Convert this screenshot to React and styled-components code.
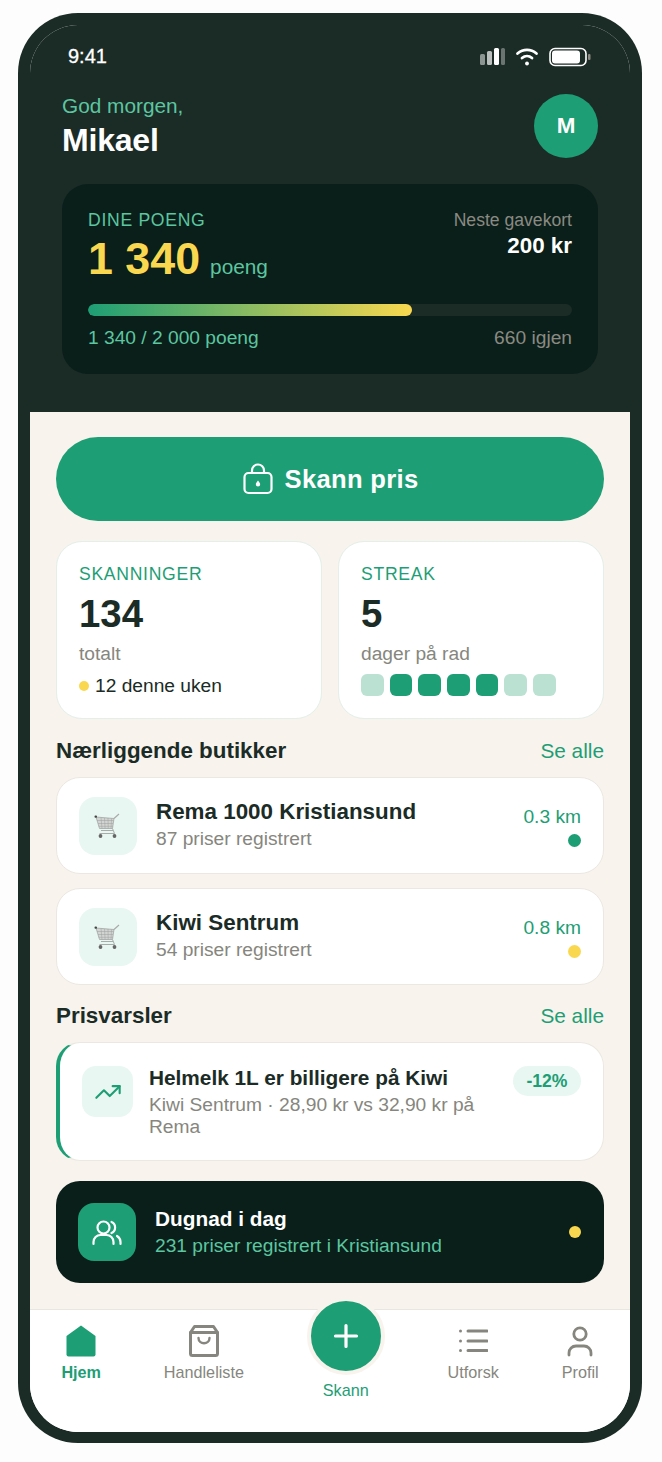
import React from 'react';
import styled, { createGlobalStyle } from 'styled-components';
import { TrendingUp } from 'lucide-react';

const GlobalStyle = createGlobalStyle`
  html, body {
    margin: 0;
    padding: 0;
    background: #fdfdfd;
  }
  body {
    font-family: "Liberation Sans", Arial, sans-serif;
  }
  * {
    box-sizing: border-box;
  }
`;

const Phone = styled.div`
  width: 624px;
  height: 1430px;
  margin: 13px 0 0 18px;
  background: #1b2b26;
  border-radius: 60px;
  padding: 12px 12px 11px;
`;

const Screen = styled.div`
  height: 100%;
  border-radius: 48px;
  overflow: hidden;
  display: flex;
  flex-direction: column;
  background: #fff;
`;

const Header = styled.header`
  height: 387px;
  background: #1b2b26;
  padding: 0 32px;
  flex-shrink: 0;
`;

const StatusBar = styled.div`
  height: 46px;
  margin: 0 -24px;
  padding: 0 29px 0 30px;
  display: flex;
  align-items: flex-end;
  justify-content: space-between;
  color: #fff;
  font-size: 20px;
  line-height: 30px;
  -webkit-text-stroke: 0.3px #fff;
`;

const StatusIcons = styled.div`
  display: flex;
  align-items: center;
  height: 28px;
`;

const Greeting = styled.div`
  display: flex;
  justify-content: space-between;
  margin-top: 23px;
`;

const Hello = styled.div`
  color: #5cc6a0;
  font-size: 20.8px;
  line-height: 24px;
  margin-bottom: 4px;
`;

const Name = styled.div`
  color: #fff;
  font-size: 32px;
  font-weight: 700;
  line-height: 37px;
  letter-spacing: -0.2px;
`;

const Avatar = styled.div`
  width: 64px;
  height: 64px;
  border-radius: 50%;
  background: #1d9e75;
  color: #fff;
  font-size: 22.4px;
  font-weight: 700;
  display: flex;
  align-items: center;
  justify-content: center;
`;

const PointsCard = styled.section`
  height: 190px;
  margin-top: 25px;
  padding: 24px 26px 0;
  background: #0a1f1a;
  border-radius: 26px;
`;

const PointsTop = styled.div`
  display: flex;
  justify-content: space-between;
  height: 96px;
`;

const PointsLabel = styled.div`
  color: #5cc6a0;
  font-size: 17.6px;
  line-height: 24px;
  letter-spacing: 0.7px;
`;

const PointsValue = styled.div`
  display: flex;
  align-items: baseline;
  gap: 10px;
  color: #f9d84f;
  font-size: 44.8px;
  font-weight: 700;
  line-height: 52px;
`;

const PointsUnit = styled.span`
  color: #5cc6a0;
  font-size: 20.8px;
  font-weight: 400;
`;

const NextGift = styled.div`
  text-align: right;
  color: #8a8a82;
  font-size: 17.6px;
  line-height: 24px;
`;

const GiftValue = styled.div`
  color: #fff;
  font-size: 22.4px;
  font-weight: 700;
  line-height: 28px;
`;

const Track = styled.div`
  height: 12px;
  background: #1b2b26;
  border-radius: 6px;
  overflow: hidden;
`;

const Fill = styled.div`
  height: 100%;
  border-radius: 6px;
  background: linear-gradient(90deg, #1d9e75, #f9d84f);
`;

const ProgressLabels = styled.div`
  display: flex;
  justify-content: space-between;
  margin-top: 9px;
  font-size: 19.2px;
  line-height: 26px;
  color: #5cc6a0;
`;

const MutedSpan = styled.span`
  color: #8a8a82;
`;

const Main = styled.main`
  flex: 1;
  background: #f8f3ed;
  padding: 25px 26px 0;
  display: flex;
  flex-direction: column;
`;

const ScanButton = styled.button`
  height: 84px;
  flex-shrink: 0;
  border: 0;
  border-radius: 42px;
  background: #1d9e75;
  color: #fff;
  font-family: inherit;
  font-size: 25.6px;
  font-weight: 700;
  letter-spacing: 0.3px;
  display: flex;
  align-items: center;
  justify-content: center;
  gap: 11px;
`;

const Stats = styled.div`
  display: grid;
  grid-template-columns: 1fr 1fr;
  gap: 16px;
  margin-top: 20px;
`;

const StatCard = styled.div`
  height: 178px;
  background: #fff;
  border: 1px solid #e3efe9;
  border-radius: 26px;
  padding: 20px 22px 0;
`;

const StatLabel = styled.div`
  color: #1d9e75;
  font-size: 17.6px;
  line-height: 24px;
  letter-spacing: 0.7px;
`;

const StatValue = styled.div`
  color: #1b2b26;
  font-size: 38.4px;
  font-weight: 700;
  line-height: 44px;
  margin-top: 6px;
`;

const StatSub = styled.div`
  color: #86867e;
  font-size: 19.2px;
  line-height: 24px;
  margin-top: 6px;
`;

const StatNote = styled.div`
  display: flex;
  align-items: center;
  gap: 6px;
  color: #1b2b26;
  font-size: 19.2px;
  line-height: 24px;
  margin-top: 8px;
`;

const Dot = styled.span`
  flex-shrink: 0;
  width: ${(p) => p.$size || 13}px;
  height: ${(p) => p.$size || 13}px;
  border-radius: 50%;
  background: ${(p) => (p.$green ? '#1d9e75' : '#f9d84f')};
`;

const StreakRow = styled.div`
  display: flex;
  gap: 6px;
  margin-top: 8px;
`;

const StreakDay = styled.span`
  width: 22.7px;
  height: 22px;
  border-radius: 6px;
  background: ${(p) => (p.$on ? '#1d9e75' : '#bbe1d3')};
`;

const SectionHead = styled.div`
  display: flex;
  justify-content: space-between;
  align-items: center;
  height: 26px;
  margin-top: ${(p) => p.$top}px;
  margin-bottom: ${(p) => p.$bottom}px;
`;

const SectionTitle = styled.h2`
  margin: 0;
  color: #1b2b26;
  font-size: 22.4px;
  font-weight: 700;
`;

const SeeAll = styled.a`
  color: #1d9e75;
  font-size: 20.8px;
`;

const StoreList = styled.div`
  display: flex;
  flex-direction: column;
  gap: 14px;
`;

const StoreCard = styled.div`
  height: 97px;
  background: #fff;
  border: 1px solid #ebe8e2;
  border-radius: 24px;
  padding: 0 22px;
  display: flex;
  align-items: center;
`;

const StoreIcon = styled.div`
  width: 58px;
  height: 58px;
  flex-shrink: 0;
  border-radius: 16px;
  background: #e8f7f1;
  display: flex;
  align-items: center;
  justify-content: center;
`;

const StoreInfo = styled.div`
  flex: 1;
  margin-left: 19px;
`;

const StoreName = styled.div`
  color: #1b2b26;
  font-size: 22.4px;
  font-weight: 700;
  line-height: 28px;
  margin-top: -1px;
`;

const StoreSub = styled.div`
  color: #86867e;
  font-size: 19.2px;
  line-height: 26px;
`;

const StoreRight = styled.div`
  display: flex;
  flex-direction: column;
  align-items: flex-end;
  gap: 4px;
  color: #1d9e75;
  font-size: 19.2px;
  line-height: 26px;
`;

const AlertCard = styled.div`
  height: 119px;
  background: #fff;
  border: 1px solid #ebe8e2;
  border-left: 4px solid #1d9e75;
  border-radius: 24px;
  padding: 23px 22px 0 22px;
  display: flex;
  align-items: flex-start;
`;

const AlertIcon = styled.div`
  width: 51px;
  height: 51px;
  flex-shrink: 0;
  border-radius: 14px;
  background: #e8f7f1;
  color: #1d9e75;
  display: flex;
  align-items: center;
  justify-content: center;
`;

const AlertBody = styled.div`
  flex: 1;
  margin: -1px 30px 0 16px;
`;

const AlertTitle = styled.div`
  color: #1b2b26;
  font-size: 20.8px;
  font-weight: 700;
  line-height: 26px;
`;

const AlertSub = styled.div`
  color: #86867e;
  font-size: 19.2px;
  line-height: 22px;
  margin-top: 3px;
`;

const Badge = styled.div`
  flex-shrink: 0;
  height: 30px;
  padding: 0 13.5px;
  border-radius: 15px;
  background: #e8f7f1;
  color: #1d9e75;
  font-size: 17.6px;
  font-weight: 700;
  display: flex;
  align-items: center;
`;

const DugnadCard = styled.div`
  height: 102px;
  flex-shrink: 0;
  margin-top: 20px;
  background: #0a1f1a;
  border-radius: 24px;
  padding: 0 23px 0 22px;
  display: flex;
  align-items: center;
`;

const DugnadIcon = styled.div`
  width: 58px;
  height: 58px;
  border-radius: 16px;
  background: #1d9e75;
  display: flex;
  align-items: center;
  justify-content: center;
`;

const DugnadBody = styled.div`
  flex: 1;
  margin-left: 19px;
`;

const DugnadTitle = styled.div`
  color: #fff;
  font-size: 20.8px;
  font-weight: 700;
  line-height: 28px;
`;

const DugnadSub = styled.div`
  color: #5cc6a0;
  font-size: 19.2px;
  line-height: 26px;
`;

const Nav = styled.nav`
  height: 123px;
  flex-shrink: 0;
  background: #fff;
  border-top: 1px solid #e8e6e0;
  display: flex;
  justify-content: space-around;
  align-items: flex-start;
  padding-top: 15px;
`;

const NavItem = styled.div`
  display: flex;
  flex-direction: column;
  align-items: center;
  gap: 5px;
  color: ${(p) => (p.$active ? '#1d9e75' : '#86867e')};
  font-size: 16.2px;
  font-weight: ${(p) => (p.$active ? 700 : 400)};
  line-height: 20px;
`;

const NavScan = styled.div`
  display: flex;
  flex-direction: column;
  align-items: center;
  margin-top: -28px;
  color: #1d9e75;
  font-size: 16.2px;
  line-height: 20px;
  gap: 5px;
`;

const Fab = styled.div`
  width: 78px;
  height: 78px;
  border-radius: 50%;
  background: #1d9e75;
  border: 4px solid #f8f3ed;
  display: flex;
  align-items: center;
  justify-content: center;
`;

const SignalIcon = () => (
  <svg width="26" height="20" viewBox="0 0 26 20" fill="#fff">
    <rect x="0" y="7" width="5" height="11" rx="1.5" opacity="0.5" />
    <rect x="7" y="4" width="5" height="14" rx="1.5" opacity="0.7" />
    <rect x="14" y="1" width="5" height="17" rx="1.5" />
    <rect x="21" y="1" width="4" height="17" rx="1.5" opacity="0.35" />
  </svg>
);

const WifiIcon = () => (
  <svg width="24" height="20" viewBox="0 0 24 20" fill="none" stroke="#fff" strokeWidth="2.8" strokeLinecap="round" style={{ marginLeft: 9 }}>
    <path d="M2.500 6.500c5.600-4.800 13.400-4.800 19 0" />
    <path d="M7 11c3-2.600 7-2.600 10 0" />
    <circle cx="12" cy="16.500" r="1.900" fill="#fff" stroke="none" />
  </svg>
);

const BatteryIcon = () => (
  <svg width="44" height="20" viewBox="0 0 44 20" style={{ marginLeft: 10 }}>
    <rect x="1" y="1.500" width="36" height="17" rx="5" fill="none" stroke="#fff" strokeWidth="1.6" />
    <rect x="3" y="3.500" width="28" height="13" rx="3" fill="#fff" />
    <rect x="39" y="7" width="2.500" height="6" rx="1" fill="#8a8a82" />
  </svg>
);

const ScanIcon = () => (
  <svg width="32" height="32" viewBox="0 0 32 32" fill="none" stroke="#fff" strokeWidth="2.2">
    <rect x="2.500" y="10" width="27" height="20" rx="4" />
    <path d="M10 10V7.500a6 6 0 0 1 12 0V10" />
    <path d="M16 17.500c-1.400 1.700-2.200 2.800-2.200 3.800a2.200 2.200 0 0 0 4.400 0c0-1-.8-2.100-2.200-3.800z" fill="#fff" stroke="none" />
  </svg>
);

const CartIcon = () => (
  <svg width="30" height="28" viewBox="0 0 30 28" fill="none">
    <path d="M3 5l18 1.500-1.500 10H6.500z" fill="#d2d4d2" stroke="#9b9e9c" strokeWidth="0.7" />
    <path d="M4 8.500h16.500M5 11.500h15M5.800 14.300h14M8 5.500l1 11M11.500 6l.6 10.500M15 6l.2 10.500M18.500 6.500l-.5 10" stroke="#9b9e9c" strokeWidth="0.5" />
    <path d="M21 6.500l5-4.500" stroke="#a8aba9" strokeWidth="1.200" />
    <path d="M19.500 16.500l2 5H6.500M8 18.500h12" stroke="#a8aba9" strokeWidth="1" />
    <circle cx="7.500" cy="24" r="1.900" fill="#666" />
    <circle cx="21.500" cy="24" r="1.900" fill="#666" />
    <rect x="1.500" y="3.500" width="2.500" height="2.200" rx="1" fill="#444" />
  </svg>
);

const PeopleIcon = () => (
  <svg width="30" height="30" viewBox="0 0 30 30" fill="none" stroke="#fff" strokeWidth="2.200" strokeLinecap="round">
    <circle cx="11.500" cy="10.500" r="6" />
    <path d="M1.500 27v-2a7 7 0 0 1 7-7h6a7 7 0 0 1 7 7v2" />
    <path d="M19.500 5a6 6 0 0 1 0 11" />
    <path d="M25 19a7 7 0 0 1 3.500 6v2" />
  </svg>
);

const HomeIcon = () => (
  <svg width="30" height="32" viewBox="0 0 30 32" fill="#1d9e75">
    <path d="M15 0.500L29.500 11v18.500a2 2 0 0 1-2 2h-25a2 2 0 0 1-2-2V11z" />
  </svg>
);

const BagIcon = () => (
  <svg width="30" height="32" viewBox="0 0 30 32" fill="none" stroke="#86867e" strokeWidth="3" strokeLinejoin="round" strokeLinecap="round">
    <path d="M5.500 1.500h19L28.500 7.500v21a2 2 0 0 1-2 2h-23a2 2 0 0 1-2-2v-21z" />
    <path d="M1.500 7.500h27" />
    <path d="M9.500 13c0 7 11 7 11 0" strokeWidth="2.400" />
  </svg>
);

const ListIcon = () => (
  <svg width="30" height="32" viewBox="0 0 30 32" fill="none" stroke="#86867e" strokeWidth="3" strokeLinecap="round">
    <path d="M10 6h19M10 16h19M10 25.500h19" />
    <circle cx="2.500" cy="6" r="1.500" fill="#86867e" stroke="none" />
    <circle cx="2.500" cy="16" r="1.500" fill="#86867e" stroke="none" />
    <circle cx="2.500" cy="25.500" r="1.500" fill="#86867e" stroke="none" />
  </svg>
);

const PersonIcon = () => (
  <svg width="30" height="32" viewBox="0 0 30 32" fill="none" stroke="#86867e" strokeWidth="2.800" strokeLinecap="round">
    <circle cx="15" cy="9" r="6.200" />
    <path d="M4 30v-2a7 7 0 0 1 7-7h8a7 7 0 0 1 7 7v2" />
  </svg>
);

const PlusIcon = () => (
  <svg width="26" height="26" viewBox="0 0 26 26" stroke="#fff" strokeWidth="3.200" strokeLinecap="round">
    <path d="M13 2.500v21M2.500 13h21" />
  </svg>
);

const stores = [
  { name: 'Rema 1000 Kristiansund', sub: '87 priser registrert', km: '0.3 km', green: true },
  { name: 'Kiwi Sentrum', sub: '54 priser registrert', km: '0.8 km', green: false },
];

const streak = [false, true, true, true, true, false, false];

export default function App() {
  return (
    <>
      <GlobalStyle />
      <Phone>
        <Screen>
          <Header>
            <StatusBar>
              <span>9:41</span>
              <StatusIcons>
                <SignalIcon />
                <WifiIcon />
                <BatteryIcon />
              </StatusIcons>
            </StatusBar>
            <Greeting>
              <div>
                <Hello>God morgen,</Hello>
                <Name>Mikael</Name>
              </div>
              <Avatar>M</Avatar>
            </Greeting>
            <PointsCard>
              <PointsTop>
                <div>
                  <PointsLabel>DINE POENG</PointsLabel>
                  <PointsValue>
                    1 340 <PointsUnit>poeng</PointsUnit>
                  </PointsValue>
                </div>
                <NextGift>
                  Neste gavekort
                  <GiftValue>200 kr</GiftValue>
                </NextGift>
              </PointsTop>
              <Track>
                <Fill style={{ width: '67%' }} />
              </Track>
              <ProgressLabels>
                <span>1 340 / 2 000 poeng</span>
                <MutedSpan>660 igjen</MutedSpan>
              </ProgressLabels>
            </PointsCard>
          </Header>

          <Main>
            <ScanButton>
              <ScanIcon />
              Skann pris
            </ScanButton>

            <Stats>
              <StatCard>
                <StatLabel>SKANNINGER</StatLabel>
                <StatValue>134</StatValue>
                <StatSub>totalt</StatSub>
                <StatNote>
                  <Dot $size={10} />
                  12 denne uken
                </StatNote>
              </StatCard>
              <StatCard>
                <StatLabel>STREAK</StatLabel>
                <StatValue>5</StatValue>
                <StatSub>dager på rad</StatSub>
                <StreakRow>
                  {streak.map((on, i) => (
                    <StreakDay key={i} $on={on} />
                  ))}
                </StreakRow>
              </StatCard>
            </Stats>

            <SectionHead $top={19} $bottom={13}>
              <SectionTitle>Nærliggende butikker</SectionTitle>
              <SeeAll>Se alle</SeeAll>
            </SectionHead>
            <StoreList>
              {stores.map((s) => (
                <StoreCard key={s.name}>
                  <StoreIcon>
                    <CartIcon />
                  </StoreIcon>
                  <StoreInfo>
                    <StoreName>{s.name}</StoreName>
                    <StoreSub>{s.sub}</StoreSub>
                  </StoreInfo>
                  <StoreRight>
                    {s.km}
                    <Dot $green={s.green} />
                  </StoreRight>
                </StoreCard>
              ))}
            </StoreList>

            <SectionHead $top={18} $bottom={13}>
              <SectionTitle>Prisvarsler</SectionTitle>
              <SeeAll>Se alle</SeeAll>
            </SectionHead>
            <AlertCard>
              <AlertIcon>
                <TrendingUp size={28} strokeWidth={1.8} />
              </AlertIcon>
              <AlertBody>
                <AlertTitle>Helmelk 1L er billigere på Kiwi</AlertTitle>
                <AlertSub>Kiwi Sentrum · 28,90 kr vs 32,90 kr på Rema</AlertSub>
              </AlertBody>
              <Badge>-12%</Badge>
            </AlertCard>

            <DugnadCard>
              <DugnadIcon>
                <PeopleIcon />
              </DugnadIcon>
              <DugnadBody>
                <DugnadTitle>Dugnad i dag</DugnadTitle>
                <DugnadSub>231 priser registrert i Kristiansund</DugnadSub>
              </DugnadBody>
              <Dot $size={12} />
            </DugnadCard>
          </Main>

          <Nav>
            <NavItem $active>
              <HomeIcon />
              Hjem
            </NavItem>
            <NavItem>
              <BagIcon />
              Handleliste
            </NavItem>
            <NavScan>
              <Fab>
                <PlusIcon />
              </Fab>
              Skann
            </NavScan>
            <NavItem>
              <ListIcon />
              Utforsk
            </NavItem>
            <NavItem>
              <PersonIcon />
              Profil
            </NavItem>
          </Nav>
        </Screen>
      </Phone>
    </>
  );
}
